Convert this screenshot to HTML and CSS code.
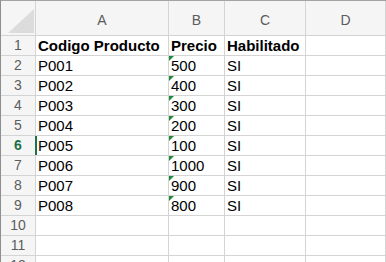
FILE: index.html
```html
<html>
<head>
    <link rel="stylesheet" href="styles.css">
</head>
<body>
    <div class="sheet">
        <div class="hd corner"><span class="tri"></span></div>
        <div class="hd col">A</div>
        <div class="hd col">B</div>
        <div class="hd col">C</div>
        <div class="hd col">D</div>

        <div class="hd row">1</div>
        <div class="cell b">Codigo Producto</div>
        <div class="cell b">Precio</div>
        <div class="cell b">Habilitado</div>
        <div class="cell"></div>

        <div class="hd row">2</div>
        <div class="cell">P001</div>
        <div class="cell txt">500</div>
        <div class="cell">SI</div>
        <div class="cell"></div>

        <div class="hd row">3</div>
        <div class="cell">P002</div>
        <div class="cell txt">400</div>
        <div class="cell">SI</div>
        <div class="cell"></div>

        <div class="hd row">4</div>
        <div class="cell">P003</div>
        <div class="cell txt">300</div>
        <div class="cell">SI</div>
        <div class="cell"></div>

        <div class="hd row">5</div>
        <div class="cell">P004</div>
        <div class="cell txt">200</div>
        <div class="cell">SI</div>
        <div class="cell"></div>

        <div class="hd row active">6</div>
        <div class="cell selected">P005</div>
        <div class="cell txt">100</div>
        <div class="cell">SI</div>
        <div class="cell"></div>

        <div class="hd row">7</div>
        <div class="cell">P006</div>
        <div class="cell txt">1000</div>
        <div class="cell">SI</div>
        <div class="cell"></div>

        <div class="hd row">8</div>
        <div class="cell">P007</div>
        <div class="cell txt">900</div>
        <div class="cell">SI</div>
        <div class="cell"></div>

        <div class="hd row">9</div>
        <div class="cell">P008</div>
        <div class="cell txt">800</div>
        <div class="cell">SI</div>
        <div class="cell"></div>

        <div class="hd row">10</div>
        <div class="cell"></div>
        <div class="cell"></div>
        <div class="cell"></div>
        <div class="cell"></div>

        <div class="hd row">11</div>
        <div class="cell"></div>
        <div class="cell"></div>
        <div class="cell"></div>
        <div class="cell"></div>

        <div class="hd row">12</div>
        <div class="cell"></div>
        <div class="cell"></div>
        <div class="cell"></div>
        <div class="cell"></div>
    </div>
</body>
</html>
```

FILE: styles.css
```css
body { margin: 0; height: 262px; overflow: hidden; background: #fff; font-family: "Liberation Sans", Arial, sans-serif; }

.sheet {
    display: grid;
    grid-template-columns: 34px 132px 55px 80px 79px;
    grid-template-rows: 34px repeat(12, 19px);
    gap: 1px;
    width: 385px;
    background: #d4d4d4;
    border-top: 1px solid #a3a3a3;
    border-left: 1px solid #8e8e8e;
    border-right: 1px solid #c6c6c6;
}

.hd { background: #f5f5f5; color: #5c5c5c; font-size: 14px; display: flex; align-items: center; justify-content: center; }
.hd.col { padding-top: 4px; box-sizing: border-box; }
.hd.row { line-height: 19px; }
.hd.active { color: #1e7145; font-weight: bold; }

.corner { position: relative; }
.tri { position: absolute; right: 1px; bottom: 2px; width: 26px; height: 24px; background: #dcdcdc; clip-path: polygon(100% 0, 100% 100%, 0 100%); }

.cell { background: #fff; color: #000; font-size: 15px; line-height: 19px; padding-left: 2px; white-space: nowrap; overflow: hidden; position: relative; }
.cell.b { font-weight: bold; }
.cell.txt::before { content: ""; position: absolute; left: 0; top: 0; border-top: 5px solid #1f8a3c; border-right: 5px solid transparent; }
.cell.selected { overflow: visible; }
.cell.selected::before { content: ""; position: absolute; left: -1px; top: 0; bottom: 0; width: 2px; background: #217346; }
```
